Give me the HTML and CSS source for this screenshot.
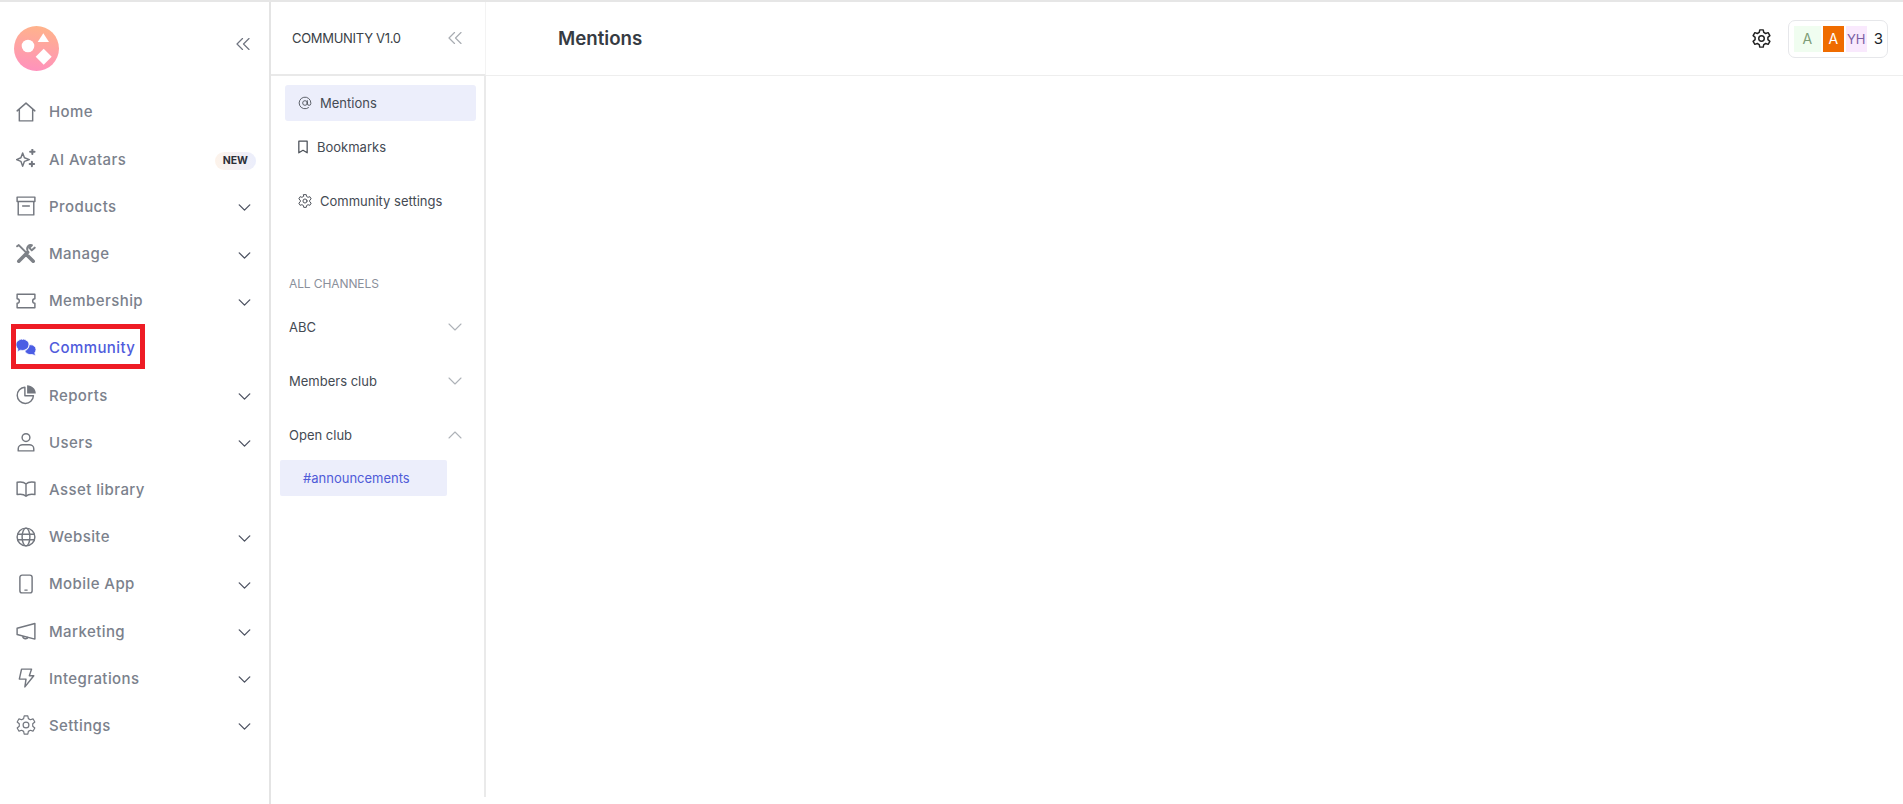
FILE: index.html
```html
<!DOCTYPE html>
<html lang="en">
<head>
    <meta charset="UTF-8">
    <meta name="viewport" content="width=device-width, initial-scale=1.0">
    <title>Community</title>
    <link rel="stylesheet" href="styles.css">
</head>
<body>
    <div class="app">
        <!-- Main navigation -->
        <aside class="sidebar">
            <div class="brand">
                <svg class="logo" viewBox="0 0 45 45">
                    <defs>
                        <linearGradient id="logoFill" x1="0.6" y1="0" x2="0.45" y2="1">
                            <stop offset="0" stop-color="#ffb38a"/>
                            <stop offset="1" stop-color="#ff92bd"/>
                        </linearGradient>
                    </defs>
                    <circle cx="22.5" cy="22.5" r="22.5" fill="url(#logoFill)"/>
                    <circle cx="14" cy="20" r="6.3" fill="#fff"/>
                    <path d="M29.300 7.300L35 16H23.700z" fill="#fff"/>
                    <path d="M29.700 22.700l8 8-8 8-8-8z" fill="#fff"/>
                </svg>
                <svg class="collapse" viewBox="0 0 14 12"><path d="M6.500 .5L1 6l5.500 5.500M13 .5L7.500 6l5.500 5.500"/></svg>
            </div>
            <nav class="nav">
                <a class="nav-item"><svg class="nav-icon" viewBox="0 0 18 18"><path d="M1 8l8-7 8 7M3 6.500V17h12V6.500"/></svg><span>Home</span></a>
                <a class="nav-item"><svg class="nav-icon" viewBox="0 0 18 18"><path d="M6 3.500l1.600 4.400L12 9.500l-4.400 1.600L6 15.500l-1.600-4.400L.5 9.500l3.900-1.600z"/><path class="icon-thick" d="M14.700 .5v4M12.700 2.500h4M14.300 11.500v4M12.300 13.500h4"/></svg><span>AI Avatars</span><span class="badge">NEW</span></a>
                <a class="nav-item"><svg class="nav-icon" viewBox="0 0 18 18"><path d="M1 1h16v4H1zM2 5v12h14V5M6 9h6"/></svg><span>Products</span><svg class="chevron" viewBox="0 0 14 8"><path d="M1 1l6 6 6-6"/></svg></a>
                <a class="nav-item"><svg class="nav-icon tool-icon" viewBox="0 0 18 18"><path class="tool-thick" d="M10.500 10.500l5 5M2.500 15.500l8-8"/><path class="icon-thick" d="M1 2l1.500-1L9 7.500M16.800 3.300l-2.600 2.400-2.200-2.200 2.300-2.400c-2.700-.7-5 1.500-4 4.500"/></svg><span>Manage</span><svg class="chevron" viewBox="0 0 14 8"><path d="M1 1l6 6 6-6"/></svg></a>
                <a class="nav-item"><svg class="nav-icon" viewBox="0 0 18 18"><path d="M1 3h16v4a2 2 0 000 4v4H1v-4a2 2 0 000-4z"/></svg><span>Membership</span><svg class="chevron" viewBox="0 0 14 8"><path d="M1 1l6 6 6-6"/></svg></a>
                <a class="nav-item nav-active"><svg class="nav-icon" viewBox="0 0 18 18"><path d="M5.800 1c3.200 0 5.900 2.200 5.900 5.100s-2.700 5.100-5.900 5.100c-.6 0-1.200-.1-1.700-.2L1.200 12.400l.5-2.600C.6 8.800 0 7.500 0 6.100 0 3.200 2.600 1 5.800 1z"/><path d="M13 6c2.800 0 5 1.900 5 4.400 0 1.100-.4 2.100-1.100 2.900l.7 2.700-3-1.200c-3 .7-6.200-1-6.700-3.500 1.900-.3 3.800-2.200 4.100-5.300z"/></svg><span>Community</span></a>
                <a class="nav-item"><svg class="nav-icon" viewBox="0 0 18 18"><path d="M8 2a7.300 7.300 0 107.700 7.700H8z"/><path class="icon-solid" d="M10 .3v7.400h7.800c0-4.100-3.500-7.400-7.800-7.400z"/></svg><span>Reports</span><svg class="chevron" viewBox="0 0 14 8"><path d="M1 1l6 6 6-6"/></svg></a>
                <a class="nav-item"><svg class="nav-icon" viewBox="0 0 18 18"><circle cx="9" cy="5" r="3.500"/><path d="M2 17v-2c0-2 2-3.500 4-3.500h6c2 0 4 1.500 4 3.500v2z"/></svg><span>Users</span><svg class="chevron" viewBox="0 0 14 8"><path d="M1 1l6 6 6-6"/></svg></a>
                <a class="nav-item"><svg class="nav-icon" viewBox="0 0 18 18"><path d="M9 4.500C7.500 3 4 2.500 1 3v11c3-.5 6.500 0 8 1.500 1.500-1.500 5-2 8-1.500V3c-3-.5-6.500 0-8 1.500zM9 4.500v11"/></svg><span>Asset library</span></a>
                <a class="nav-item"><svg class="nav-icon" viewBox="0 0 18 18"><circle cx="9" cy="9" r="8"/><ellipse cx="9" cy="9" rx="3.500" ry="8"/><path d="M1.500 6.500h15M1.500 11.500h15"/></svg><span>Website</span><svg class="chevron" viewBox="0 0 14 8"><path d="M1 1l6 6 6-6"/></svg></a>
                <a class="nav-item"><svg class="nav-icon" viewBox="0 0 18 18"><rect x="3.500" y="1" width="11" height="16" rx="2"/><path d="M8 14.500h2"/></svg><span>Mobile App</span><svg class="chevron" viewBox="0 0 14 8"><path d="M1 1l6 6 6-6"/></svg></a>
                <a class="nav-item"><svg class="nav-icon" viewBox="0 0 18 18"><path d="M17 2.200v14.100L1 12.200V6.500zM6 13.600c0 3 4.200 3 4.700 1"/></svg><span>Marketing</span><svg class="chevron" viewBox="0 0 14 8"><path d="M1 1l6 6 6-6"/></svg></a>
                <a class="nav-item"><svg class="nav-icon" viewBox="0 0 18 18"><path d="M5 1h9l-2 6h4l-8 10 1-7H3z"/></svg><span>Integrations</span><svg class="chevron" viewBox="0 0 14 8"><path d="M1 1l6 6 6-6"/></svg></a>
                <a class="nav-item"><svg class="nav-icon" viewBox="0 0 24 24"><use href="#gear"/></svg><span>Settings</span><svg class="chevron" viewBox="0 0 14 8"><path d="M1 1l6 6 6-6"/></svg></a>
            </nav>
        </aside>

        <!-- Community channels -->
        <section class="channels">
            <div class="channels-head">
                <span>COMMUNITY V1.0</span>
                <svg class="collapse" viewBox="0 0 14 12"><path d="M6.500 .5L1 6l5.500 5.500M13 .5L7.500 6l5.500 5.500"/></svg>
            </div>
            <div class="channels-body">
                <a class="side-link side-active"><svg class="side-icon" viewBox="0 0 24 24"><circle cx="12" cy="12" r="4"/><path d="M16 8v5a3 3 0 006 0v-1a10 10 0 10-4 8"/></svg><span>Mentions</span></a>
                <a class="side-link link-book"><svg class="side-icon book-icon" viewBox="0 0 12 16"><path d="M1 1h10v14l-5-3-5 3z"/></svg><span>Bookmarks</span></a>
                <a class="side-link link-settings"><svg class="side-icon" viewBox="0 0 24 24"><use href="#gear"/></svg><span>Community settings</span></a>

                <h4 class="channels-title">ALL CHANNELS</h4>
                <div class="channel-row"><span>ABC</span><svg class="channel-chevron" viewBox="0 0 14 8"><path d="M1 1l6 6 6-6"/></svg></div>
                <div class="channel-row"><span>Members club</span><svg class="channel-chevron" viewBox="0 0 14 8"><path d="M1 1l6 6 6-6"/></svg></div>
                <div class="channel-row"><span>Open club</span><svg class="channel-chevron" viewBox="0 0 14 8"><path d="M1 7l6-6 6 6"/></svg></div>
                <a class="channel-link">#announcements</a>
            </div>
        </section>

        <!-- Page content -->
        <main class="content">
            <header class="content-head">
                <h1>Mentions</h1>
                <svg class="head-gear" viewBox="0 0 24 24"><use href="#gear"/></svg>
                <div class="avatars">
                    <span class="avatar avatar-green">A</span>
                    <span class="avatar avatar-orange">A</span>
                    <span class="avatar avatar-pink">YH</span>
                    <span class="avatar-count">3</span>
                </div>
            </header>
        </main>
    </div>

    <svg class="sprite" aria-hidden="true">
        <symbol id="gear" viewBox="1 1 22 22">
            <circle cx="12" cy="12" r="3.200"/>
            <path d="M10 2h4l.6 3 2.200 1.200 2.900-1 2 3.500-2.300 2v2.600l2.300 2-2 3.500-2.900-1-2.200 1.200-.6 3h-4l-.6-3-2.200-1.200-2.900 1-2-3.500 2.300-2v-2.600l-2.300-2 2-3.500 2.900 1L9.400 5z"/>
        </symbol>
    </svg>
</body>
</html>
```

FILE: styles.css
```css
*, *::after { box-sizing: border-box; }
html, body { height: 100%; }
body { margin: 0; background: #fff; color: #333; font-family: Inter, "Open Sans", Arial, sans-serif; overflow: hidden; }
svg { fill: none; stroke: currentColor; stroke-linejoin: round; stroke-linecap: round; flex-shrink: 0; }
a { color: inherit; text-decoration: none; }
.sprite { display: none; }

.app { display: flex; height: 100%; border-top: 2px solid #e6e6e6; }

.sidebar { width: 271px; flex-shrink: 0; border-right: 2px solid #e4e4e4; }
.brand { height: 86.4px; padding: 24px 19px 0 14px; display: flex; justify-content: space-between; align-items: flex-start; }
.logo { width: 45px; height: 45px; stroke: none; }
.collapse { width: 14px; height: 12px; margin-top: 12px; color: #6f7480; stroke-width: 1.2; }

.nav { display: flex; flex-direction: column; }
.nav-item { height: 47.2px; padding: 0 18px 0 17px; display: flex; align-items: center; color: #7b818c; font-size: 15px; letter-spacing: .42px; font-weight: 500; }
.nav-icon { width: 20px; height: 20px; margin: 0 13px 0 -1px; stroke-width: 1.3; color: #73777f; }
.nav-item .chevron { width: 13px; height: 7px; margin: 3px 0 0 auto; color: #4b5160; stroke-width: 1.5; }
.icon-thick { stroke-width: 1.8; }
.tool-thick { stroke-width: 3.2; }
.tool-icon { color: #7d8187; }
.icon-solid { fill: currentColor; stroke: none; }
.nav-active { position: relative; color: #4f5bdc; }
.nav-active::after { content: ""; position: absolute; left: 11px; top: 0; width: 134px; height: 45px; border: 5px solid #ee1c25; }
.nav-active .nav-icon { color: #4b5de4; fill: currentColor; stroke: #fff; stroke-width: .7; }
.badge { margin: 4px -5px 0 auto; padding: 0 8px; height: 18px; line-height: 18px; border-radius: 9px; background: linear-gradient(90deg, #fdf3ea, #ebeefc); color: #2b2f38; font-size: 10.5px; font-weight: 700; letter-spacing: 0; }

.channels { width: 215px; flex-shrink: 0; display: flex; flex-direction: column; height: 795px; }
.channels-head { height: 74px; padding: 0 23px 0 21px; display: flex; justify-content: space-between; align-items: center; border-bottom: 2px solid #e9e9e9; border-right: 1px solid #f3f3f3; font-size: 13px; letter-spacing: -.3px; color: #3a3f47; }
.channels-head .collapse { margin-top: 0; color: #a8acb2; }
.channels-body { flex: 1; padding: 9px 8px 0 0; border-right: 2px solid #eaeaea; }
.side-link { display: flex; align-items: center; height: 36px; margin-left: 14px; padding-left: 13px; font-size: 13px; color: #444a53; }
.side-icon { width: 14px; height: 14px; margin-right: 8px; color: #4a4f57; stroke-width: 1.5; }
.book-icon { width: 10px; margin-right: 9px; }
.side-active { background: #eceefb; border-radius: 3px; }
.link-book { margin-top: 8px; }
.link-settings { margin-top: 18px; }
.channels-title { margin: 56px 0 0 18px; font-size: 12px; line-height: 18px; font-weight: 400; letter-spacing: -.1px; color: #8a909b; }
.channel-row { height: 54px; margin-left: 18px; padding-right: 14px; display: flex; justify-content: space-between; align-items: center; font-size: 13px; color: #444a53; }
.channels-title + .channel-row { margin-top: 7px; }
.channel-chevron { width: 14px; height: 8px; color: #aeb2b8; stroke-width: 1.1; }
.channel-link { display: block; width: 167px; height: 36px; margin: -2px 0 0 9px; padding-left: 23px; line-height: 36px; font-size: 13px; background: #eceefb; border-radius: 2px; color: #4f5bd8; }

.content { flex: 1; }
.content-head { height: 74px; padding: 0 15px 0 72px; display: flex; align-items: center; border-bottom: 1px solid #eeeeee; }
.content-head h1 { margin: 0 auto 0 0; font-size: 18.7px; font-weight: 600; color: #363b42; }
.head-gear { width: 19px; height: 19px; margin-right: 17px; color: #222; stroke-width: 1.7; }
.avatars { width: 100px; height: 38px; padding: 5px 4px 5px 5px; display: flex; align-items: stretch; gap: 2px; border: 1px solid #e6e7ea; border-radius: 7px; font-size: 14px; }
.avatar { display: flex; align-items: center; justify-content: center; width: 21px; }
.avatar-green { width: 27px; background: #f0fdf0; color: #7d9d78; }
.avatar-orange { background: #ef6c00; color: #fff; }
.avatar-pink { background: #f9e9fd; color: #7a5fa3; font-size: 13px; }
.avatar-count { margin-left: 5px; font-size: 15px; color: #1a1f2b; line-height: 26px; }
```
